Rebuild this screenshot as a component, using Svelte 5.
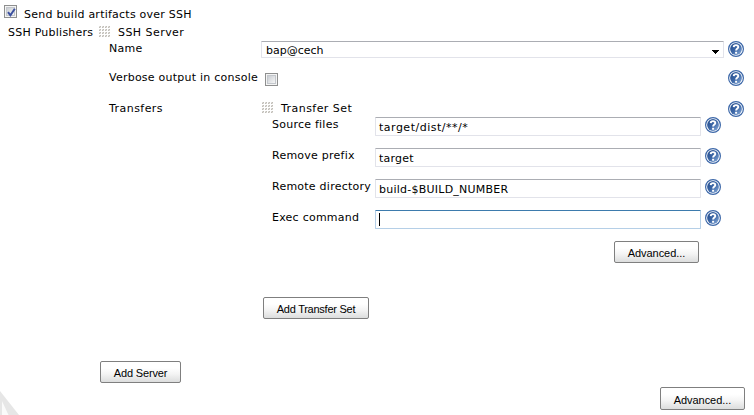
<script>
  const transferFields = [
    { label: 'Source files', value: 'target/dist/**/*', wide: true },
    { label: 'Remove prefix', value: 'target' },
    { label: 'Remote directory', value: 'build-$BUILD_NUMBER' },
    { label: 'Exec command', value: '', focused: true }
  ];
</script>

{#snippet help()}
  <svg class="help" width="16" height="16" viewBox="0 0 16 16">
    <defs>
      <linearGradient id="disc" x1="0" y1="0" x2="1" y2="1">
        <stop offset="0" stop-color="#234b8c" />
        <stop offset=".5" stop-color="#3b66a6" />
        <stop offset="1" stop-color="#8eb0dc" />
      </linearGradient>
    </defs>
    <circle cx="8" cy="8" r="7.4" fill="#fff" stroke="#3c67a8" stroke-width="1.2" />
    <circle cx="8" cy="8" r="5.9" fill="url(#disc)" />
    <path d="M5.7 6.1C5.8 3.6 10.3 3.5 10.3 6 10.3 7.6 8.1 7.5 8.1 9.6" fill="none" stroke="#fff" stroke-width="1.9" />
    <rect x="7.1" y="10.8" width="2" height="1.9" fill="#fff" />
  </svg>
{/snippet}

{#snippet grip()}
  <svg class="grip" width="12" height="12" viewBox="0 0 12 12" shape-rendering="crispEdges">
    {#each [0, 3, 6, 9] as y}
      {#each [0, 3, 6, 9] as x}
        <rect {x} {y} width="2" height="2" fill="#dddbd7" />
        <rect x={x + 1} y={y} width="1" height="1" fill="#c0bdb7" />
        <rect {x} y={y + 1} width="1" height="1" fill="#c0bdb7" />
      {/each}
    {/each}
  </svg>
{/snippet}

{#snippet check(on)}
  <span class="check" role="checkbox" aria-checked={on} aria-label="toggle" tabindex="-1">
    {#if on}
      <svg width="9" height="9" viewBox="0 0 9 9"><path d="M1 4.2 3.4 7.2 7.8.8" fill="none" stroke="#3c51a0" stroke-width="2" /></svg>
    {/if}
  </span>
{/snippet}

<main>
  <div class="title">{@render check(true)}<span>Send build artifacts over SSH</span></div>
  <div class="publishers">
    <div class="pub-label">SSH Publishers</div>
    <div class="server">
      <div class="head">{@render grip()}<span>SSH Server</span></div>
      <div class="row name">
        <span class="label">Name</span>
        <div class="select"><span>bap@cech</span>
          <svg width="7" height="4" viewBox="0 0 7 4" shape-rendering="crispEdges"><path d="M0 0H7V1H6V2H5V3H4V4H3V3H2V2H1V1H0Z" /></svg>
        </div>
        {@render help()}
      </div>
      <div class="row verbose">
        <span class="label">Verbose output in console</span>
        {@render check(false)}
        {@render help()}
      </div>
      <div class="row transfers">
        <span class="label">Transfers</span>
        <div class="set">
          <div class="head">{@render grip()}<span>Transfer Set</span></div>
          {#each transferFields as f}
            <div class="field">
              <span class="flabel">{f.label}</span>
              <div class="input" class:focused={f.focused} class:wide={f.wide}>{#if f.focused}<i class="caret"></i>{/if}{f.value}</div>
              {@render help()}
            </div>
          {/each}
          <button class="adv">Advanced...</button>
          <button class="addset">Add Transfer Set</button>
        </div>
        {@render help()}
      </div>
      <button class="addserver">Add Server</button>
    </div>
  </div>
  <div class="footer"><button>Advanced...</button></div>
  <svg class="mark" width="19" height="26" viewBox="0 0 19 26">
    <path d="M0 2 19 26H0Z" fill="#e6e6e6" /><path d="M2 12 8.500 26H2Z" fill="#fafafa" />
  </svg>
</main>

<style>
  :global(body) { background: #fff; }
  main {
    position: relative;
    box-sizing: border-box;
    width: 754px;
    height: 415px;
    padding-top: 6px;
    overflow: hidden;
    font: 11px/18px "DejaVu Sans", sans-serif;
    letter-spacing: .24px;
    color: #000;
    white-space: nowrap;
  }
  .title { display: flex; height: 18px; padding-left: 4px; }
  .title span:last-child { margin-left: 7px; line-height: 17px; }
  .title .check { margin-top: -1px; }
  .check {
    display: block;
    flex: none;
    box-sizing: border-box;
    width: 13px;
    height: 13px;
    border: 1px solid #8e8f8f;
    background: linear-gradient(135deg, #c9cdd2, #f6f6f6) content-box, #f4f4f4;
    padding: 2px;
    box-shadow: inset 0 0 0 1px #f4f4f4, inset 0 0 0 2px #c3c7cc;
  }
  .check svg { display: block; }
  .publishers { display: flex; }
  .pub-label { box-sizing: border-box; width: 99px; padding-left: 8px; }
  .server { width: 655px; }
  .head { display: flex; height: 16px; letter-spacing: .45px; }
  .grip { flex: none; margin: 2px 7px 0 0; }
  .row { display: flex; box-sizing: border-box; padding-left: 10px; }
  .label { flex: none; width: 152px; }
  .transfers > .label { letter-spacing: .45px; }
  .name { height: 29px; }
  .verbose { height: 31px; }
  .transfers { height: 261px; }
  .help { flex: none; margin-top: 1px; }
  .select {
    display: flex;
    align-items: flex-start;
    justify-content: space-between;
    box-sizing: border-box;
    width: 463px;
    height: 17px;
    margin: 1px 4px 0 0;
    padding: 0 4px;
    border: 1px solid #e2e3ea;
    border-top-color: #abadb3;
    border-radius: 1px;
    letter-spacing: 0;
  }
  .select svg { margin-top: 8px; }
  .verbose .check { margin: 4px 450px 0 4px; }
  .set { display: flex; flex-direction: column; width: 467px; }
  .set .head { padding-left: 1px; }
  .field { display: flex; height: 31px; padding-left: 11px; }
  .flabel { width: 103px; flex: none; }
  .input {
    position: relative;
    box-sizing: border-box;
    width: 326px;
    height: 19px;
    margin: 1px 4px 0 0;
    padding-left: 3px;
    border: 1px solid #e2e3ea;
    border-top-color: #abadb3;
    border-radius: 1px;
    line-height: 20px;
  }
  .wide { letter-spacing: .5px; }
  .focused { border-color: #b5cfe7; border-top-color: #3d7bad; }
  .caret { position: absolute; left: 3px; top: 2px; width: 1px; height: 13px; background: #000; }
  button {
    display: block;
    flex: none;
    box-sizing: border-box;
    height: 22px;
    padding: 2px 0 0;
    border: 1px solid #7f7f7f;
    border-radius: 2px;
    background: linear-gradient(#fff 30%, #f4f4f4 60%, #dcdddd);
    font: 11px/18px "Liberation Sans", sans-serif;
    letter-spacing: -.05px;
    color: #000;
  }
  .adv { width: 85px; margin: 1px 0 0 353px; }
  .addset { width: 106px; margin: 34px 0 0 2px; letter-spacing: -.25px; }
  .addserver { width: 81px; margin-left: 1px; letter-spacing: -.15px; }
  .footer { display: flex; justify-content: flex-end; padding: 4px 9px 0 0; }
  .footer button { width: 85px; height: 23px; }
  .mark { position: absolute; left: 0; bottom: 0; }
</style>
